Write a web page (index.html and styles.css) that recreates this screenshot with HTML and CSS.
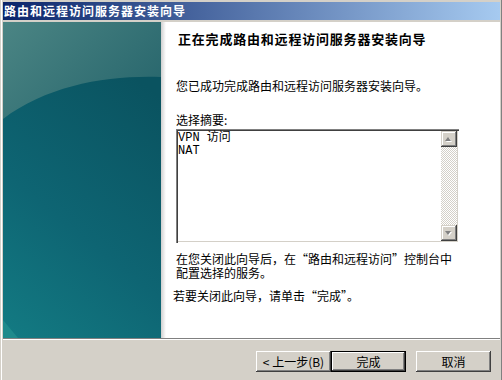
FILE: index.html
```html
<!DOCTYPE html>
<html lang="zh-CN">
<head>
    <meta charset="UTF-8">
    <title>路由和远程访问服务器安装向导</title>
    <link rel="stylesheet" href="styles.css">
</head>
<body>
    <div class="window">
        <div class="titlebar">路由和远程访问服务器安装向导</div>

        <div class="wizard">
            <div class="banner">
                <svg width="158" height="316" viewBox="0 0 158 316">
                    <defs>
                        <linearGradient id="base" x1="0.4" y1="0" x2="0" y2="1">
                            <stop offset="0" stop-color="#0a5360"/>
                            <stop offset="0.55" stop-color="#0e6573"/>
                            <stop offset="1" stop-color="#137b83"/>
                        </linearGradient>
                        <linearGradient id="glow" x1="0" y1="0" x2="1" y2="0.6">
                            <stop offset="0" stop-color="#4b8584"/>
                            <stop offset="1" stop-color="#2a686e"/>
                        </linearGradient>
                    </defs>
                    <rect width="158" height="316" fill="url(#base)"/>
                    <path d="M0 0H158V55C105 53 45 63 0 97Z" fill="url(#glow)"/>
                    <path d="M0 298L15 316H0Z" fill="#1f8a8c"/>
                </svg>
            </div>
            <div class="banner-shadow"></div>

            <div class="page">
                <h1>正在完成路由和远程访问服务器安装向导</h1>
                <p class="intro">您已成功完成路由和远程访问服务器安装向导。</p>
                <div class="summary-label">选择摘要:</div>
                <div class="summary">
                    <div class="summary-text">VPN 访问<br>NAT</div>
                    <div class="scrollbar">
                        <div class="scroll-btn up"></div>
                        <div class="scroll-track"></div>
                        <div class="scroll-btn down"></div>
                    </div>
                </div>
                <p class="note">在您关闭此向导后，在“路由和远程访问”控制台中<br>配置选择的服务。</p>
                <p class="closing">若要关闭此向导，请单击“完成”。</p>
            </div>
        </div>

        <div class="footer">
            <button class="btn">&lt; 上一步(B)</button>
            <button class="btn default">完成</button>
            <button class="btn cancel">取消</button>
        </div>
    </div>
</body>
</html>
```

FILE: styles.css
```css
* {
    margin: 0;
    padding: 0;
    box-sizing: border-box;
}

body {
    width: 502px;
    height: 380px;
    overflow: hidden;
    font-family: "Noto Sans CJK SC", sans-serif;
    font-size: 12px;
    color: #000;
}

.window {
    display: flex;
    flex-direction: column;
    width: 502px;
    height: 380px;
    padding: 2px 2px 0 3px;
    background-color: #d4d0c8;
    box-shadow: inset 1px 0 #d4d0c8, inset 2px 0 #fff, inset -1px 0 #808080;
}

.titlebar {
    height: 18px;
    margin-bottom: 2px;
    padding-left: 1px;
    background: linear-gradient(to right, #0a246a, #a6caf0);
    color: #fff;
    font-weight: bold;
    font-size: 12px;
    letter-spacing: 1px;
    line-height: 18px;
    white-space: nowrap;
}

.wizard {
    display: flex;
    height: 316px;
    background-color: #fff;
}

.banner {
    width: 158px;
    height: 316px;
}

.banner svg {
    display: block;
}

.banner-shadow {
    width: 5px;
    background: linear-gradient(to right, #cfcfcf, #fff);
}

.page {
    flex: 1;
    padding: 9px 0 0 10px;
}

.page h1 {
    margin-left: 2px;
    font-size: 13px;
    font-weight: bold;
    letter-spacing: 0.8px;
    line-height: 16px;
    white-space: nowrap;
}

.intro {
    margin-top: 32px;
    line-height: 13px;
}

.summary-label {
    margin-top: 21px;
    line-height: 13px;
}

.summary {
    display: flex;
    width: 283px;
    height: 114px;
    margin-top: 3px;
    padding: 2px;
    background-color: #fff;
    box-shadow: inset 1px 1px #808080, inset 2px 2px #404040,
                inset -1px -1px #fff, inset -2px -2px #d4d0c8;
}

.summary-text {
    flex: 1;
    padding-top: 1px;
    font-family: "Liberation Mono", "Noto Sans CJK SC", monospace;
    font-size: 12px;
    line-height: 13px;
}

.scrollbar {
    display: flex;
    flex-direction: column;
    width: 16px;
}

.scroll-track {
    flex: 1;
    background: repeating-conic-gradient(#fff 0 25%, #d4d0c8 0 50%) 0 0 / 2px 2px;
}

.scroll-btn {
    position: relative;
    height: 16px;
    background-color: #d4d0c8;
    box-shadow: inset -1px -1px #404040, inset 1px 1px #d4d0c8,
                inset -2px -2px #808080, inset 2px 2px #fff;
}

/* greyed-out arrow, the list does not scroll */
.scroll-btn::after {
    content: "";
    position: absolute;
    left: 4px;
    top: 6px;
    border-left: 3.5px solid transparent;
    border-right: 3.5px solid transparent;
    filter: drop-shadow(1px 1px 0 #fff);
}

.scroll-btn.up::after {
    border-bottom: 4px solid #808080;
}

.scroll-btn.down::after {
    border-top: 4px solid #808080;
}

.note {
    margin-top: 9px;
    line-height: 14px;
    white-space: nowrap;
}

.closing {
    margin: 9px 0 0 -3px;
    line-height: 13px;
}

.footer {
    flex: 1;
    display: flex;
    justify-content: flex-end;
    align-items: flex-start;
    padding: 12px 9px 0 0;
    border-top: 1px solid #808080;
    box-shadow: inset 0 1px #fff;
}

.btn {
    width: 75px;
    height: 21px;
    border: none;
    background-color: #d4d0c8;
    font-family: "Noto Sans CJK SC", sans-serif;
    font-size: 12px;
    color: #000;
    line-height: 19px;
    box-shadow: inset -1px -1px #404040, inset 1px 1px #fff,
                inset -2px -2px #808080;
}

.btn.default {
    border: 1px solid #000;
}

.btn.cancel {
    margin-left: 10px;
}
```
